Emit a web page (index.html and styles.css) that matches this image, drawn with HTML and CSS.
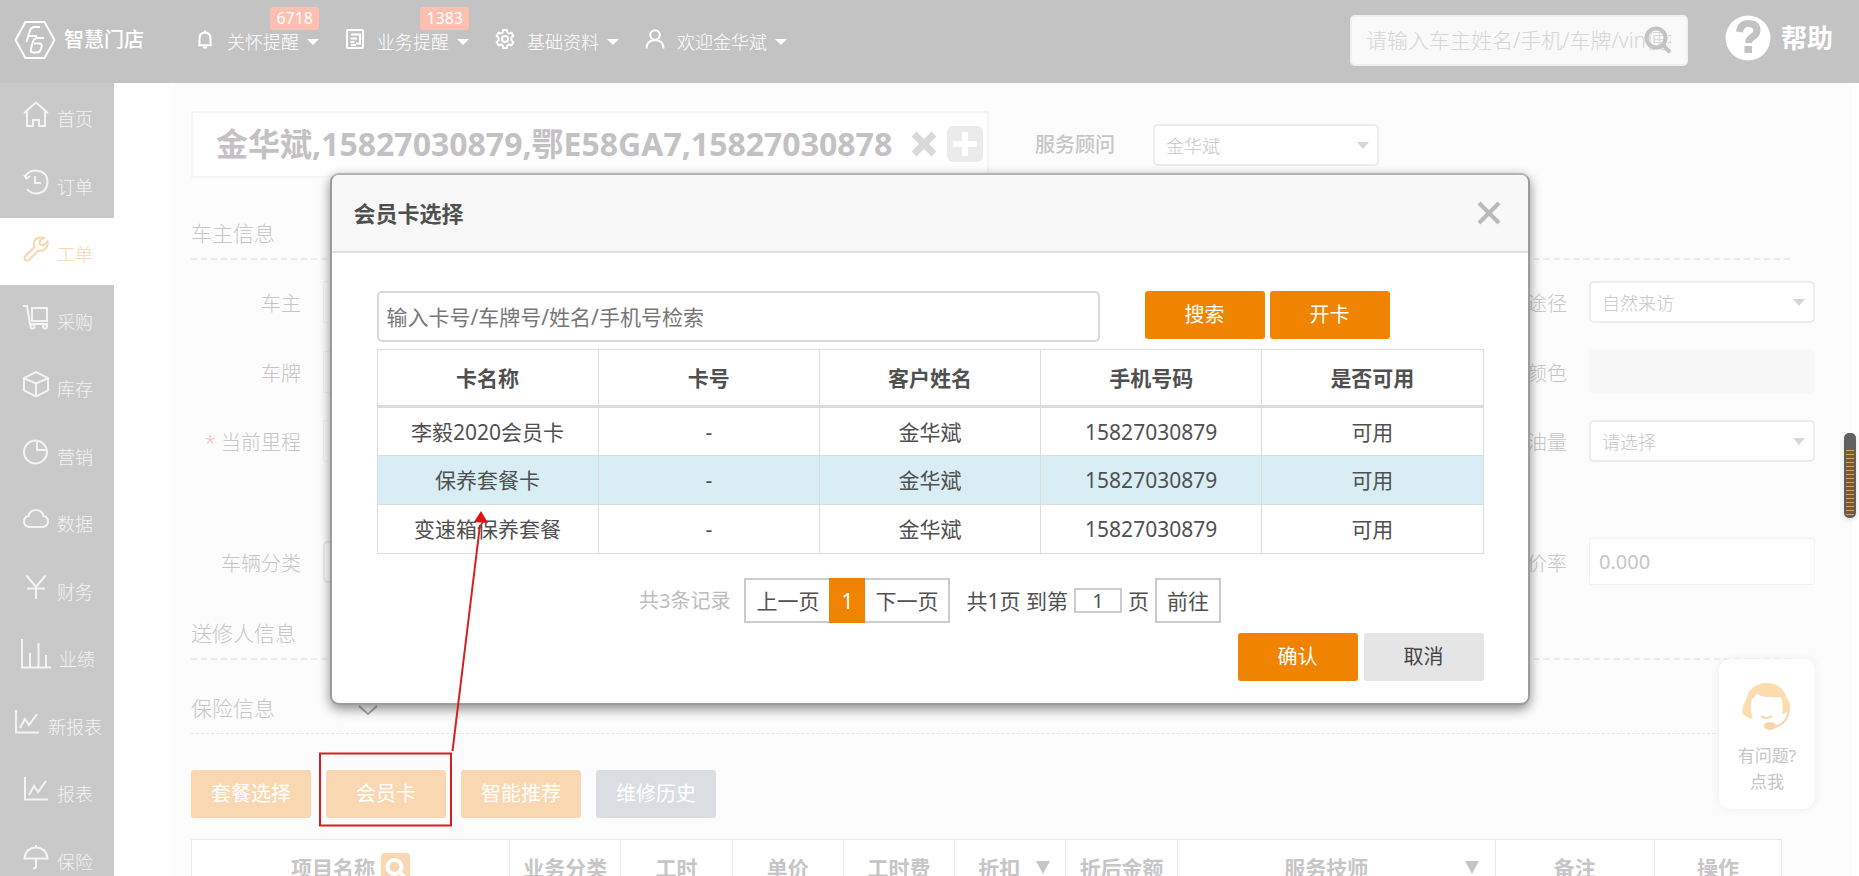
FILE: index.html
```html
<!DOCTYPE html>
<html lang="zh-CN">
<head>
<meta charset="utf-8">
<title>智慧门店 - 工单</title>
<link rel="stylesheet" href="styles.css">
</head>
<body>
<header class="topbar">
  <a class="brand" href="#">
    <svg class="brand-mark" viewBox="0 0 42 40" aria-hidden="true"><path d="M11.500 2h19L40.500 20l-10 18h-19L1.500 20z"/><path d="M26 7h-5q-4 0-5 3.500L12.500 22M14 16h9M30 18h-6q-4 0-5 3.500L17 29q-1 3.500 2.500 3.500h3Q26 32.500 27 29l.5-2q1-3.500-2-3.500H20"/></svg>
    <span>智慧门店</span>
  </a>
  <nav class="topnav">
    <a class="topnav-item" href="#"><svg class="nav-icon" viewBox="0 0 20 20"><path d="M4.500 16v-7q0-5 5.500-5.500Q15.500 4 15.500 9v7M3 16.200h14M10 3.500V1.500M8 18.500h4"/></svg>关怀提醒<i class="caret"></i><b class="badge">6718</b></a>
    <a class="topnav-item" href="#"><svg class="nav-icon" viewBox="0 0 20 20"><rect x="2" y="1" width="16" height="18" rx="1"/><path d="M6 5.500h9v9h-4M5.500 9.500H12M5.500 13h4M6 16h5"/></svg>业务提醒<i class="caret"></i><b class="badge">1383</b></a>
    <a class="topnav-item" href="#"><svg class="nav-icon" viewBox="0 0 20 20"><path d="M8.200 1h3.600l.6 2.600 1.600.9 2.500-.8 1.800 3.200-1.900 1.800v2.600l1.900 1.800-1.800 3.200-2.500-.8-1.600.9-.6 2.600H8.200l-.6-2.600-1.600-.9-2.500.8-1.800-3.200 1.900-1.800V8.700L1.700 6.900l1.800-3.200 2.500.8 1.600-.9z"/><circle cx="10" cy="10" r="3"/></svg>基础资料<i class="caret"></i></a>
    <a class="topnav-item" href="#"><svg class="nav-icon" viewBox="0 0 20 20"><circle cx="10" cy="6" r="4.800"/><path d="M1.500 19.500q0-8 8.500-8.500 8.500.5 8.500 8.500"/></svg>欢迎金华斌<i class="caret"></i></a>
  </nav>
  <form class="search">
    <input class="search-input" type="text" aria-label="搜索" placeholder="请输入车主姓名/手机/车牌/vin便捷查询">
    <button class="search-button" type="button" aria-label="搜索"><svg viewBox="0 0 28 28"><circle cx="12" cy="12" r="9.500"/><path d="M19 19l7 7.500"/></svg></button>
  </form>
  <a class="help" href="#"><svg class="help-mark" viewBox="0 0 46 46"><circle cx="23" cy="23" r="22.500"/><path d="M14.500 17q1-8.500 9-8.500 8.500 0 8.500 7 0 4-4.500 6.500-4 2.500-4 6"/><rect x="19.500" y="31" width="7.500" height="7"/></svg>帮助</a>
</header>

<div class="shell">
  <nav class="sidebar">
    <a class="side-item" href="#"><svg class="side-icon" viewBox="0 0 26 26"><path d="M1 12L13 1.500 25 12M4 10v15h6v-6h6v6h6V10"/></svg><span>首页</span></a>
    <a class="side-item" href="#"><svg class="side-icon" viewBox="0 0 26 26"><path d="M2.500 7Q6 1.500 13 1.500q11.500 1 11.500 11.500Q24 24 13 24.500 7 24 4 20M1 6l2.500 3.500L7 7M12 7v7h6"/></svg><span>订单</span></a>
    <a class="side-item is-active" href="#"><svg class="side-icon" viewBox="0 0 26 26"><path d="M21 2q-7-2-9.500 3-1 3 0 6L2.500 20q-2 2.500 0 4 2 1.500 4-.5L15 14.500q4 1 7-1.500 3.500-3 2.500-7.500L20 9.500 16.500 8 17 4.500z"/></svg><span>工单</span></a>
    <a class="side-item" href="#"><svg class="side-icon" viewBox="0 0 26 26"><path d="M0 2h4l3 18h18M9 4h15v13H9z"/><circle cx="9.500" cy="22.500" r="2"/><circle cx="22" cy="22.500" r="2"/></svg><span>采购</span></a>
    <a class="side-item" href="#"><svg class="side-icon" viewBox="0 0 26 26"><path d="M13 1L25 7v12.500L13 25.500 1 19.500V7zM1.500 7.500L13 12.500l11.500-5M13 12.500v13"/></svg><span>库存</span></a>
    <a class="side-item" href="#"><svg class="side-icon" viewBox="0 0 26 26"><circle cx="12.500" cy="13" r="11.500"/><path d="M14 1.500V11h10"/></svg><span>营销</span></a>
    <a class="side-item" href="#"><svg class="side-icon" viewBox="0 0 26 26"><path d="M6 21q-5-1-5-5.500Q1 11 5.500 10 7 4 13 4t7.500 6Q25 11 25 15.500 25 20 20 21z"/></svg><span>数据</span></a>
    <a class="side-item" href="#"><svg class="side-icon" viewBox="0 0 26 26"><path d="M3.500 1.500L13 13l9.500-11.500M13 13v12M4 14.500h18"/></svg><span>财务</span></a>
    <a class="side-item" href="#"><svg class="side-icon side-icon-bars" viewBox="0 0 30 30"><path d="M1 0v28.500h29M9 28V14M17.500 28V4M25 28V16"/></svg><span>业绩</span></a>
    <a class="side-item" href="#"><svg class="side-icon" viewBox="0 0 26 26"><path d="M2 1v22.500h23M6 19l5-9 4 6 8-11"/></svg><span>新报表</span></a>
    <a class="side-item" href="#"><svg class="side-icon" viewBox="0 0 26 26"><path d="M2 1v22.500h23M6 19l5-9 4 6 8-11"/></svg><span>报表</span></a>
    <a class="side-item" href="#"><svg class="side-icon" viewBox="0 0 26 26"><path d="M1.500 14.500Q2.500 4 13 3.500 23.500 4 24.500 14.500zM13 3.500V1M13 14.500V23q-.5 2-3 1"/></svg><span>保险</span></a>
  </nav>

  <main class="panel">
    <div class="customer-row">
      <div class="customer">
        <strong>金华斌,15827030879,鄂E58GA7,15827030878</strong>
        <button class="icon-button" type="button" aria-label="清除"><svg class="clear-icon" viewBox="0 0 26 26"><path d="M3 3l20 20M23 3L3 23"/></svg></button>
        <button class="icon-button" type="button" aria-label="新增"><svg class="add-icon" viewBox="0 0 36 36"><rect width="36" height="36" rx="6"/><path d="M18 6v24M6 18h24"/></svg></button>
      </div>
      <label class="advisor-label" for="advisor">服务顾问</label>
      <span class="select-wrap"><select id="advisor"><option>金华斌</option></select></span>
    </div>

    <h2 class="section-title">车主信息</h2>
    <form class="owner-form">
      <label for="owner">车主</label><input class="is-quiet" id="owner" type="text">
      <label for="source">途径</label><span class="select-wrap"><select id="source"><option>自然来访</option></select></span>
      <label for="plate">车牌</label><input class="is-quiet" id="plate" type="text">
      <label for="color">颜色</label><input class="is-disabled" id="color" type="text" disabled>
      <label for="mileage"><i class="required">*</i> 当前里程</label><input class="is-quiet" id="mileage" type="text">
      <label for="fuel">油量</label><span class="select-wrap"><select id="fuel"><option>请选择</option></select></span>
      <label class="spaced" for="category">车辆分类</label><span class="select-wrap spaced"><select id="category"><option></option></select></span>
      <label class="spaced" for="rate">价率</label><input class="spaced tall" id="rate" type="text" value="0.000">
    </form>

    <h2 class="section-title section-next">送修人信息</h2>
    <h2 class="section-title section-next section-fold">保险信息<svg class="chevron" viewBox="0 0 20 10"><path d="M1 1l9 8 9-8"/></svg></h2>

    <div class="actions">
      <button class="btn btn-soft" type="button">套餐选择</button>
      <button class="btn btn-soft" type="button">会员卡</button>
      <button class="btn btn-soft" type="button">智能推荐</button>
      <button class="btn btn-mute" type="button">维修历史</button>
    </div>

    <table class="items">
      <colgroup><col class="c-name"><col span="6" class="c-num"><col class="c-tech"><col class="c-note"><col class="c-op"></colgroup>
      <thead><tr>
        <th><span class="with-search">项目名称<svg class="mini-search" viewBox="0 0 29 29"><rect width="29" height="29" rx="4"/><circle cx="13.500" cy="14" r="7"/><path d="M18.500 19l6 6"/></svg></span></th>
        <th>业务分类</th><th>工时</th><th>单价</th><th>工时费</th>
        <th><span class="with-sort">折扣<i class="sort"></i></span></th>
        <th>折后金额</th>
        <th><span class="with-sort sort-end">服务技师<i class="sort"></i></span></th>
        <th>备注</th><th>操作</th>
      </tr></thead>
    </table>
  </main>
</div>

<a class="chat" href="#">
  <svg class="chat-face" viewBox="0 0 50 50"><path class="hair" d="M25 1C12 1 6 9 4 18q-5 7-3 14 4 4 10 5-4-10-1-20 4-3 5-5 6 4 24 3 3 7 1 17 5-1 8-5 1-6-3-11C42 8 37 1 25 1z"/><path class="mic" d="M19 34q5 4 11 0M47 27q-1 15-15 18"/><ellipse cx="28" cy="44" rx="6" ry="4"/></svg>
  <span>有问题?<br>点我</span>
</a>
<div class="meter"><i></i></div>

<div class="overlay">
  <section class="dialog" role="dialog" aria-labelledby="dialog-title">
    <header class="dialog-head">
      <h1 id="dialog-title">会员卡选择</h1>
      <button class="icon-button" type="button" aria-label="关闭"><svg class="close-icon" viewBox="0 0 24 24"><path d="M2 2l20 20M22 2L2 22"/></svg></button>
    </header>
    <div class="dialog-body">
      <div class="card-search">
        <input class="card-input" type="text" aria-label="检索" placeholder="输入卡号/车牌号/姓名/手机号检索">
        <button class="btn btn-main" type="button">搜索</button>
        <button class="btn btn-main" type="button">开卡</button>
      </div>
      <table class="cards">
        <thead><tr><th>卡名称</th><th>卡号</th><th>客户姓名</th><th>手机号码</th><th>是否可用</th></tr></thead>
        <tbody>
          <tr><td>李毅2020会员卡</td><td>-</td><td>金华斌</td><td>15827030879</td><td>可用</td></tr>
          <tr class="is-selected"><td>保养套餐卡</td><td>-</td><td>金华斌</td><td>15827030879</td><td>可用</td></tr>
          <tr><td>变速箱保养套餐</td><td>-</td><td>金华斌</td><td>15827030879</td><td>可用</td></tr>
        </tbody>
      </table>
      <div class="pager">
        <span class="pager-total">共3条记录</span>
        <div class="pager-group"><button type="button">上一页</button><button class="is-current" type="button">1</button><button type="button">下一页</button></div>
        <label class="pager-jump" for="page">共1页 到第</label>
        <input class="page-input" id="page" type="text" value="1">
        <span>页</span>
        <button class="pager-go" type="button">前往</button>
      </div>
      <footer class="dialog-foot">
        <button class="btn btn-main" type="button">确认</button>
        <button class="btn btn-plain" type="button">取消</button>
      </footer>
    </div>
  </section>
</div>

<svg class="callout" width="180" height="330" viewBox="0 0 180 330" aria-hidden="true"><rect x="10" y="248.500" width="131" height="72"/><path d="M142.500 246L170 20"/><polygon points="171,6 178,18 164,17"/></svg>
</body>
</html>
```
FILE: styles.css
```css
* { box-sizing: border-box; }
body {
  margin: 0;
  height: 100vh;
  overflow: hidden;
  position: relative;
  background: #fff;
  color: #c6c6c6;
  font-family: "Noto Sans", "Noto Sans CJK SC", sans-serif;
  font-size: 20px;
  font-weight: 300;
  line-height: 30px;
}
a { color: inherit; text-decoration: none; }
button, input, select { font: inherit; color: inherit; margin: 0; }
button { cursor: pointer; padding: 0; border: 0; background: none; }
i { font-style: normal; }
svg { display: block; flex: none; fill: none; stroke: currentColor; stroke-width: 2; }

/* top bar */
.topbar {
  display: flex;
  align-items: center;
  height: 83px;
  padding: 0 26px 3px 14px;
  background: #c3c3c3;
  color: #fff;
}
.brand { display: flex; align-items: center; gap: 8px; width: 181px; font-weight: 500; }
.brand-mark { width: 42px; height: 40px; }
.topnav { display: flex; gap: 26px; font-size: 18px; font-weight: 300; }
.topnav-item { position: relative; display: flex; align-items: center; gap: 8px; padding-top: 3px; white-space: nowrap; }
.nav-icon { width: 20px; height: 20px; margin: 0 4px 5px 0; }
.caret { border: 6px solid transparent; border-top-color: #fff; border-bottom: 0; }
.badge {
  position: absolute;
  right: 0;
  top: -17px;
  padding: 0 6px;
  border-radius: 3px;
  background: #ffbfb0;
  font-size: 16px;
  font-weight: 400;
  line-height: 23px;
}
.search { display: flex; align-items: center; position: relative; width: 338px; margin-left: auto; }
.search-input {
  width: 100%;
  height: 51px;
  padding: 0 15px 0 14px;
  border: 2px solid #f0f0f0;
  border-radius: 5px;
  background: #f9f9f9;
  font-size: 21px;
}
.search-input::placeholder { color: #d6d6d6; opacity: 1; }
.search-button { position: absolute; right: 16px; color: #c3c3c3; }
.search-button svg { width: 28px; height: 28px; stroke-width: 4; }
.help { display: flex; align-items: center; gap: 10px; margin-left: 37px; padding-bottom: 5px; font-size: 26px; font-weight: 700; white-space: nowrap; }
.help-mark { width: 46px; height: 46px; }
.help-mark circle { fill: #fff; stroke: none; }
.help-mark path { stroke: #c3c3c3; stroke-width: 7; }
.help-mark rect { fill: #c3c3c3; stroke: none; }

/* side bar */
.shell { display: flex; align-items: flex-start; }
.sidebar { flex: none; width: 114px; background: #c9c9c9; color: #f3f3f3; font-size: 18px; }
.side-item { display: flex; align-items: center; justify-content: center; gap: 8px; height: 68px; padding-left: 2px; white-space: nowrap; }
.side-item:nth-child(odd) { height: 67px; }
.side-item span { padding-top: 5px; }
.side-item.is-active { background: #fff; color: #f9d6af; }
.side-icon { width: 26px; height: 26px; margin-bottom: 5px; }
.side-icon-bars { width: 30px; height: 30px; }

/* work order panel */
.panel { flex: 1; min-width: 0; margin: 0 7px 0 59px; padding: 28px 37px 40px 18px; background: #fcfcfc; }
.customer-row { display: flex; align-items: center; height: 67px; }
.customer {
  display: flex;
  align-items: center;
  gap: 10px;
  height: 67px;
  width: 798px;
  padding: 0 4px 2px 23px;
  border: 2px solid #f5f5f5;
  background: #fff;
}
.customer strong { margin-right: auto; color: #c3c1c3; font-size: 32px; font-weight: 700; white-space: nowrap; }
.clear-icon { width: 26px; height: 26px; color: #dadada; stroke-width: 7; }
.add-icon { width: 36px; height: 36px; }
.add-icon rect { fill: #ebebeb; stroke: none; }
.add-icon path { stroke: #fff; stroke-width: 6; }
.advisor-label { margin: 0 38px 0 46px; font-weight: 500; }
.select-wrap { position: relative; display: block; width: 226px; }
.select-wrap::after {
  content: "";
  position: absolute;
  right: 10px;
  top: 18px;
  border: 6px solid transparent;
  border-top: 7px solid #d6d6d6;
  border-bottom: 0;
}
select, .owner-form input {
  display: block;
  width: 100%;
  height: 42px;
  border: 2px solid #ededed;
  border-radius: 5px;
  background: #fff;
  appearance: none;
  opacity: 1;
}
select { padding: 2px 11px 0; font-size: 18px; }
.section-title {
  margin: 40px 25px 0 0;
  padding-bottom: 10px;
  border-bottom: 2px dashed #ebebeb;
  font-size: 21px;
  font-weight: 300;
}
.section-next { margin-top: 33px; }
.section-fold { display: flex; align-items: center; gap: 83px; border-bottom: 1px dashed #e8e8e8; }
.chevron { width: 20px; height: 10px; margin-top: 4px; color: #aaa; }
.owner-form {
  display: grid;
  grid-template-columns: 110px 1fr 200px 226px;
  column-gap: 22px;
  row-gap: 26px;
  align-items: center;
  padding-top: 21px;
}
.owner-form label { padding-top: 4px; text-align: right; white-space: nowrap; }
.required { color: #f2c4c4; }
.owner-form .is-quiet { border: 1px solid #f2f2f2; border-radius: 2px; background: #fcfcfc; }
.owner-form .is-disabled { height: 45px; border-color: #f8f8f8; background: #f7f7f7; }
.owner-form .tall { height: 47px; padding: 0 9px; border: 1px solid #f2f2f2; border-radius: 2px; font-weight: 400; }
.owner-form .spaced { margin-top: 50px; }
.actions { display: flex; gap: 15px; margin-top: 36px; }
.btn { flex: none; width: 120px; height: 48px; border-radius: 3px; font-weight: 400; }
.btn-soft { background: #f9d7b1; color: #fff; }
.btn-mute { background: #dadde2; color: #fff; }
.btn-main { background: #f08300; color: #fff; }
.btn-plain { background: #e5e5e5; color: #444; }
.items { width: calc(100% - 33px); margin-top: 21px; border-collapse: collapse; table-layout: fixed; background: #fff; font-size: 21px; }
.items th { height: 56px; padding: 0; border: 1px solid #ebebeb; font-weight: 700; white-space: nowrap; }
.c-name { width: 20%; }
.c-num { width: 7%; }
.c-tech { width: 20%; }
.c-note { width: 10%; }
.c-op { width: 8%; }
.with-search { display: flex; align-items: center; justify-content: center; gap: 6px; }
.mini-search { width: 29px; height: 29px; stroke: #fff; stroke-width: 4; }
.mini-search rect { fill: #f9d7b1; stroke: none; }
.with-sort { position: relative; display: flex; align-items: center; justify-content: center; gap: 16px; padding-left: 8px; }
.sort { border: 7px solid transparent; border-top: 13px solid #c6c6c6; border-bottom: 0; }
.sort-end { padding: 0 20px 0 0; }
.sort-end .sort { position: absolute; right: 16px; }

/* floating widgets */
.chat {
  position: absolute;
  right: 44px;
  top: 659px;
  display: flex;
  flex-direction: column;
  align-items: center;
  gap: 11px;
  width: 96px;
  height: 150px;
  padding-top: 23px;
  border-radius: 12px;
  background: #fff;
  box-shadow: 0 0 10px #eee;
  font-size: 17px;
  font-weight: 400;
  line-height: 26px;
  text-align: center;
}
.chat-face { width: 50px; height: 50px; stroke: none; fill: #fbd3ae; }
.chat-face .hair { fill: #fddcae; }
.chat-face .mic { fill: none; stroke: #fbd3ae; stroke-width: 2; }
.meter { position: absolute; right: 3px; top: 433px; width: 12px; height: 85px; padding: 17px 2px 3px; border-radius: 5px; background: #606060; box-shadow: 0 2px 5px #ddd; }
.meter i { display: block; height: 100%; background: repeating-linear-gradient(#d9a05a 0 1px, #7a5a30 1px 4px); }

/* member card dialog */
.overlay { position: absolute; inset: 0; display: flex; align-items: flex-start; justify-content: center; padding-top: 173px; }
.dialog {
  width: 1200px;
  max-width: 96%;
  border: 2px solid #9c9c9c;
  border-top-color: #b4b4b4;
  border-radius: 9px;
  background: #fff;
  box-shadow: 0 4px 12px rgba(0, 0, 0, .45);
  color: #505050;
  font-size: 21px;
  font-weight: 400;
  overflow: hidden;
}
.dialog-head { display: flex; align-items: center; justify-content: space-between; height: 78px; padding: 0 27px 0 22px; border-bottom: 2px solid #e0e0e0; background: #f8f8f8; }
.dialog-head h1 { margin: 0; font-size: 22px; font-weight: 700; }
.close-icon { width: 24px; height: 24px; color: #b9b9b9; stroke-width: 4; }
.dialog-body { padding: 38px 44px 22px 45px; }
.card-search { display: flex; align-items: flex-start; gap: 5px; padding-right: 94px; }
.card-input { flex: 1; min-width: 0; height: 51px; margin-right: 40px; padding: 0 8px; border: 2px solid #d8d8d8; border-radius: 5px; }
.card-input::placeholder { color: #777; opacity: 1; }
.dialog .btn { font-size: 20px; }
.cards { width: 100%; margin-top: 7px; border-collapse: collapse; table-layout: fixed; text-align: center; }
.cards th, .cards td { height: 49px; padding: 0; border: 1px solid #dcdcdc; }
.cards th { height: 57px; border-bottom: 3px solid #dcdcdc; font-weight: 700; }
.cards .is-selected { background: #d9edf5; }
.pager { display: flex; align-items: center; justify-content: center; gap: 6px; margin-top: 24px; white-space: nowrap; }
.pager-total { margin-right: 8px; color: #bdbdbd; font-size: 20px; }
.pager-group { display: flex; }
.pager-group button, .pager-go { height: 45px; padding: 0 10px; border: 2px solid #ccc; }
.pager-group .is-current { width: 36px; border-color: #f08300; background: #f08300; color: #fff; }
.pager-group button:first-child { border-right: 0; }
.pager-group button:last-child { border-left: 0; }
.pager-jump { margin-left: 10px; }
.page-input { width: 48px; height: 25px; padding: 0; border: 2px solid #ccc; text-align: center; font-size: 20px; }
.dialog-foot { display: flex; justify-content: flex-end; gap: 6px; margin-top: 10px; }

/* pointer from the card button to the selected row */
.callout { position: absolute; left: 310px; top: 505px; pointer-events: none; stroke: #d81e1e; }
.callout polygon { fill: #e80f0f; stroke: none; }
```
